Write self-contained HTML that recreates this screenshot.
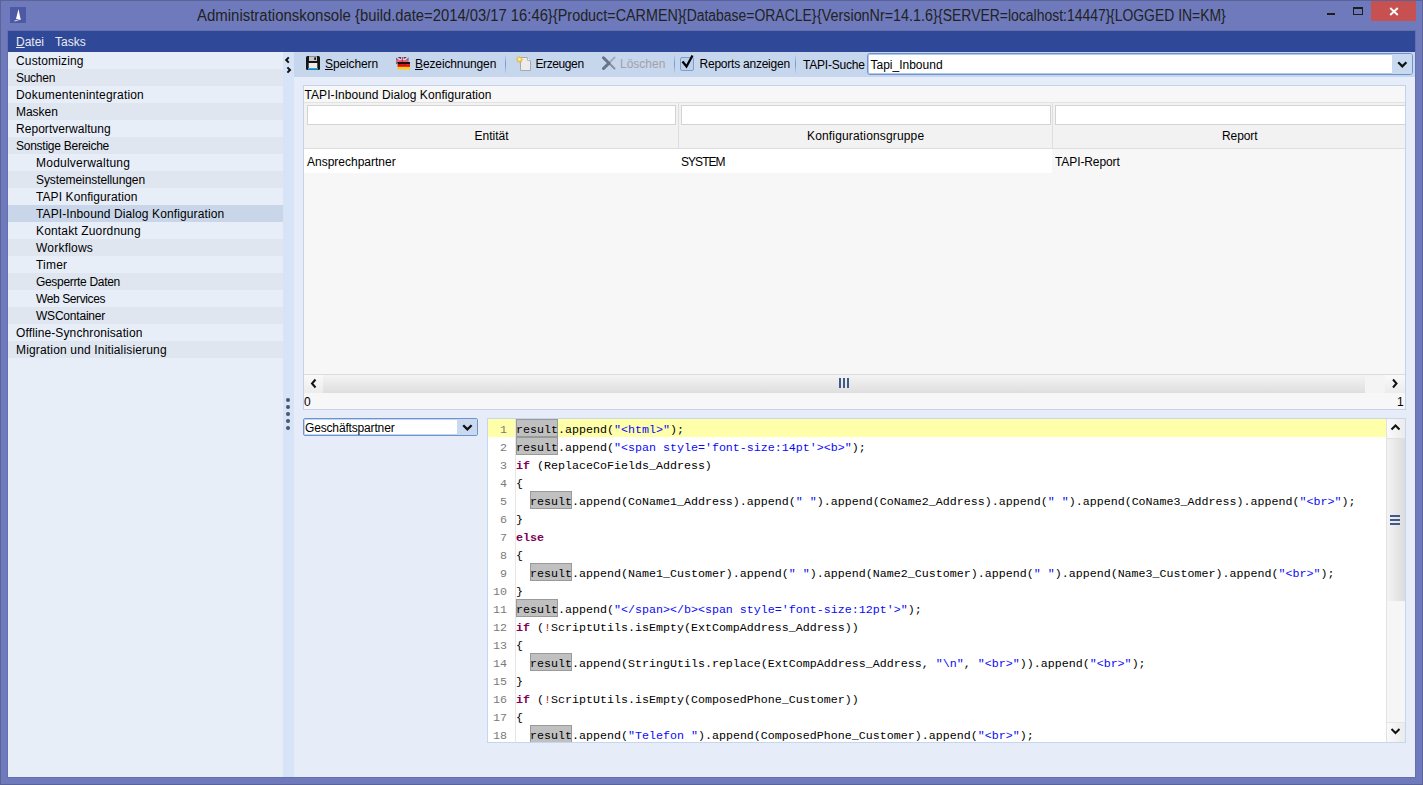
<!DOCTYPE html>
<html><head><meta charset="utf-8">
<style>
*{margin:0;padding:0;box-sizing:border-box}
html,body{width:1423px;height:785px;overflow:hidden}
body{position:relative;background:#6e7abb;font-family:"Liberation Sans",sans-serif;font-size:12px;color:#000}
.a{position:absolute}
.t{position:absolute;white-space:pre;line-height:17px;height:17px}
#frame{left:0;top:0;width:1423px;height:785px;border:1px solid #5b6499}
.tt{top:6px;font-size:16px;line-height:20px;color:#222;transform-origin:0 0}
#menubar{left:8px;top:31px;width:1407px;height:21px;background:#2f4897}
#menubar .t{color:#e8ebf3;top:3px}
#side{left:8px;top:52px;width:275px;height:725px;background:#e8eef8}
.row{position:absolute;left:0;width:275px;height:17px;line-height:17px;padding-left:8px;padding-top:1px;white-space:pre}
.row.d{background:#dfe6f0}
.row.s{background:#c9d6ea}
.row.i{padding-left:28px}
#split{left:283px;top:52px;width:11px;height:725px;background:#d7e3f6}
#main{left:294px;top:52px;width:1121px;height:725px;background:#e6edf8}
#toolbar{left:294px;top:52px;width:1121px;height:25px;background:#c6d6ec}
.sep{position:absolute;top:54px;width:1px;height:20px;background:linear-gradient(#c6d6ec,#6e97d6 50%,#c6d6ec)}
#panel{left:303px;top:85px;width:1103px;height:325px;border:1px solid #c3d3ec;background:#f7f7f7}
.ln{position:absolute;left:0;width:19px;padding-top:2px;text-align:right;font-family:"Liberation Mono",monospace;font-size:11.665px;line-height:18px;height:18px;color:#7a7a7a;white-space:pre}
.cl{position:absolute;left:28px;padding-top:2px;font-family:"Liberation Mono",monospace;font-size:11.665px;line-height:18px;height:18px;color:#000;white-space:pre}
.r{background:#c0c0c0;box-shadow:inset 0 0 0 1px #9a9a9a;display:inline-block;height:18px;margin-top:-2px;padding-top:2px;vertical-align:top}
.st{color:#0a0af5}
.k{color:#7f0055;font-weight:bold}
.x{color:#a02828}
</style></head><body>
<div id="frame" class="a"></div>
<!-- title bar -->
<div class="a" style="left:10px;top:7px;width:16px;height:16px;background:#4e59a5"></div>
<svg class="a" style="left:10px;top:7px" width="16" height="16" viewBox="0 0 16 16"><path d="M8.5 2 L10.5 12 L6 12 Z" fill="#fff"/><path d="M4.5 14 Q8 13 11 12" stroke="#fff" stroke-width="1" fill="none" opacity=".8"/></svg>
<div class="t tt" style="left:196.5px;transform:scaleX(0.9350)">Administrationskonsole </div>
<div class="t tt" style="left:354.6px;transform:scaleX(0.9244)">{build.date=2014/03/17 16:46}</div>
<div class="t tt" style="left:552.6px;transform:scaleX(0.8972)">{Product=CARMEN}</div>
<div class="t tt" style="left:682.3px;transform:scaleX(0.8711)">{Database=ORACLE}</div>
<div class="t tt" style="left:816.8px;transform:scaleX(0.8957)">{VersionNr=14.1.6}</div>
<div class="t tt" style="left:937.6px;transform:scaleX(0.8728)">{SERVER=localhost:14447}</div>
<div class="t tt" style="left:1110.2px;transform:scaleX(0.8707)">{LOGGED IN=KM}</div>
<div class="a" style="left:1327px;top:13px;width:8px;height:2px;background:#1e1e1e"></div>
<div class="a" style="left:1353px;top:7px;width:10px;height:8px;border:1px solid #1e1e1e;border-top-width:2px"></div>
<div class="a" style="left:1371px;top:1px;width:45px;height:20px;background:#c75050"></div>
<svg class="a" style="left:1389px;top:7px" width="10" height="9" viewBox="0 0 10 9"><path d="M1.2 1 L8.8 8 M8.8 1 L1.2 8" stroke="#fff" stroke-width="1.9"/></svg>

<div class="a" style="left:7px;top:30px;width:1409px;height:748px;border:1px solid #6470ad"></div>
<!-- menubar -->
<div id="menubar" class="a">
  <div class="t" style="left:8px"><u>D</u>atei</div>
  <div class="t" style="left:47px">Tasks</div>
</div>

<!-- sidebar -->
<div id="side" class="a">
  <div class="row" style="top:0;letter-spacing:0.15px">Customizing</div>
  <div class="row d" style="top:17px;letter-spacing:-0.280px">Suchen</div>
  <div class="row" style="top:34px;letter-spacing:0.185px">Dokumentenintegration</div>
  <div class="row d" style="top:51px;letter-spacing:-0.040px">Masken</div>
  <div class="row" style="top:68px;letter-spacing:0.040px">Reportverwaltung</div>
  <div class="row d" style="top:85px;letter-spacing:-0.256px">Sonstige Bereiche</div>
  <div class="row i" style="top:102px;letter-spacing:0.229px">Modulverwaltung</div>
  <div class="row i d" style="top:119px;letter-spacing:-0.089px">Systemeinstellungen</div>
  <div class="row i" style="top:136px;letter-spacing:0.088px">TAPI Konfiguration</div>
  <div class="row i s" style="top:153px;letter-spacing:0.112px">TAPI-Inbound Dialog Konfiguration</div>
  <div class="row i" style="top:170px;letter-spacing:0.156px">Kontakt Zuordnung</div>
  <div class="row i d" style="top:187px;letter-spacing:0.213px">Workflows</div>
  <div class="row i" style="top:204px;letter-spacing:0.200px">Timer</div>
  <div class="row i d" style="top:221px;letter-spacing:-0.321px">Gesperrte Daten</div>
  <div class="row i" style="top:238px;letter-spacing:-0.400px">Web Services</div>
  <div class="row i d" style="top:255px;letter-spacing:-0.210px">WSContainer</div>
  <div class="row" style="top:272px;letter-spacing:0.114px">Offline-Synchronisation</div>
  <div class="row d" style="top:289px;letter-spacing:0.161px">Migration und Initialisierung</div>
</div>
<div id="split" class="a"></div>
<div id="main" class="a"></div>
<div id="toolbar" class="a"></div>
<div id="panel" class="a"></div>


<!-- panel content -->
<div class="t" style="left:304.5px;top:87px;letter-spacing:0.075px">TAPI-Inbound Dialog Konfiguration</div>
<div class="a" style="left:304px;top:102px;width:1101px;height:47px;background:#f2f2f2;border-top:1px solid #e3e3e3;border-bottom:1px solid #dedede"></div>
<div class="a" style="left:678px;top:103px;width:1px;height:45px;background:#dedede"></div>
<div class="a" style="left:1052px;top:103px;width:1px;height:45px;background:#dedede"></div>
<div class="a" style="left:307px;top:105px;width:369px;height:20px;background:#fff;border:1px solid #d3d3d3"></div>
<div class="a" style="left:681px;top:105px;width:370px;height:20px;background:#fff;border:1px solid #d3d3d3"></div>
<div class="a" style="left:1055px;top:105px;width:350px;height:20px;background:#fff;border:1px solid #d3d3d3;border-right:0"></div>
<div class="t" style="left:474.5px;top:128px">Entität</div>
<div class="t" style="left:807px;top:128px;letter-spacing:0.16px">Konfigurationsgruppe</div>
<div class="t" style="left:1222px;top:128px;letter-spacing:-0.1px">Report</div>
<div class="a" style="left:304px;top:149px;width:748px;height:24px;background:#fff"></div>
<div class="t" style="left:307px;top:154px">Ansprechpartner</div>
<div class="t" style="left:681px;top:154px;letter-spacing:-0.95px">SYSTEM</div>
<div class="t" style="left:1055px;top:154px;letter-spacing:-0.1px">TAPI-Report</div>
<!-- h scrollbar -->
<div class="a" style="left:304px;top:374px;width:1101px;height:19px;background:linear-gradient(#f4f4f4,#dedede);border-top:1px solid #dcdcdc"></div>
<div class="a" style="left:304px;top:375px;width:19px;height:18px;background:linear-gradient(#f9f9f9,#ececec)"></div>
<div class="a" style="left:1365px;top:375px;width:20px;height:18px;background:#f4f4f4"></div>
<div class="a" style="left:1385px;top:375px;width:20px;height:18px;background:linear-gradient(#f9f9f9,#ececec)"></div>
<svg class="a" style="left:309px;top:378px" width="10" height="11" viewBox="0 0 10 11"><path d="M6.5 1.5 L3 5.5 L6.5 9.5" stroke="#111" stroke-width="2" fill="none"/></svg>
<svg class="a" style="left:1390px;top:378px" width="10" height="11" viewBox="0 0 10 11"><path d="M3 1.5 L6.5 5.5 L3 9.5" stroke="#111" stroke-width="2" fill="none"/></svg>
<div class="a" style="left:839px;top:378px;width:2px;height:10px;background:#3d5a8a"></div>
<div class="a" style="left:843px;top:378px;width:2px;height:10px;background:#3d5a8a"></div>
<div class="a" style="left:847px;top:378px;width:2px;height:10px;background:#3d5a8a"></div>
<div class="t" style="left:304px;top:394px">0</div>
<div class="t" style="left:1397px;top:394px">1</div>
<!-- splitter dots -->
<div class="a" style="left:286px;top:398px;width:4px;height:4px;border-radius:2px;background:#4a5568"></div>
<div class="a" style="left:286px;top:405px;width:4px;height:4px;border-radius:2px;background:#4a5568"></div>
<div class="a" style="left:286px;top:412px;width:4px;height:4px;border-radius:2px;background:#4a5568"></div>
<div class="a" style="left:286px;top:419px;width:4px;height:4px;border-radius:2px;background:#4a5568"></div>
<div class="a" style="left:286px;top:426px;width:4px;height:4px;border-radius:2px;background:#4a5568"></div>
<!-- combo -->
<div class="a" style="left:303px;top:418px;width:175px;height:18px;border:1px solid #6f93cf;border-radius:2px;background:#fff;box-shadow:inset 0 0 0 1px #c2d4ee"></div>
<div class="a" style="left:457px;top:419px;width:20px;height:16px;background:#c9d9ef"></div>
<svg class="a" style="left:461px;top:423px" width="12" height="10" viewBox="0 0 12 10"><path d="M2.2 2.2 L6.4 6.4 L10.6 2.2" stroke="#111" stroke-width="2.3" fill="none"/></svg>
<div class="t" style="left:305px;top:420px;letter-spacing:-0.16px">Geschäftspartner</div>

<div class="a" style="left:487px;top:418px;width:919px;height:325px;border:1px solid #c6d6ee;background:#fff"></div>
<div class="a" style="left:488px;top:419px;width:898px;height:18px;background:#ffffaa"></div>
<div class="a" style="left:515px;top:419px;width:1px;height:323px;background:#e6e6e6"></div>
<div id="code" class="a" style="left:488px;top:419px;width:898px;height:323px;overflow:hidden">
<div class="ln" style="top:0px">1</div><div class="cl" style="top:0px"><span class="r">result</span>.append(<span class="st">"&lt;html&gt;"</span>);</div>
<div class="ln" style="top:18px">2</div><div class="cl" style="top:18px"><span class="r">result</span>.append(<span class="st">"&lt;span style='font-size:14pt'&gt;&lt;b&gt;"</span>);</div>
<div class="ln" style="top:36px">3</div><div class="cl" style="top:36px"><span class="k">if</span> (ReplaceCoFields_Address)</div>
<div class="ln" style="top:54px">4</div><div class="cl" style="top:54px">{</div>
<div class="ln" style="top:72px">5</div><div class="cl" style="top:72px">  <span class="r">result</span>.append(CoName1_Address).append(<span class="st">" "</span>).append(CoName2_Address).append(<span class="st">" "</span>).append(CoName3_Address).append(<span class="st">"&lt;br&gt;"</span>);</div>
<div class="ln" style="top:90px">6</div><div class="cl" style="top:90px">}</div>
<div class="ln" style="top:108px">7</div><div class="cl" style="top:108px"><span class="k">else</span></div>
<div class="ln" style="top:126px">8</div><div class="cl" style="top:126px">{</div>
<div class="ln" style="top:144px">9</div><div class="cl" style="top:144px">  <span class="r">result</span>.append(Name1_Customer).append(<span class="st">" "</span>).append(Name2_Customer).append(<span class="st">" "</span>).append(Name3_Customer).append(<span class="st">"&lt;br&gt;"</span>);</div>
<div class="ln" style="top:162px">10</div><div class="cl" style="top:162px">}</div>
<div class="ln" style="top:180px">11</div><div class="cl" style="top:180px"><span class="r">result</span>.append(<span class="st">"&lt;/span&gt;&lt;/b&gt;&lt;span style='font-size:12pt'&gt;"</span>);</div>
<div class="ln" style="top:198px">12</div><div class="cl" style="top:198px"><span class="k">if</span> (<span class="x">!</span>ScriptUtils.isEmpty(ExtCompAddress_Address))</div>
<div class="ln" style="top:216px">13</div><div class="cl" style="top:216px">{</div>
<div class="ln" style="top:234px">14</div><div class="cl" style="top:234px">  <span class="r">result</span>.append(StringUtils.replace(ExtCompAddress_Address, <span class="st">"\n"</span>, <span class="st">"&lt;br&gt;"</span>)).append(<span class="st">"&lt;br&gt;"</span>);</div>
<div class="ln" style="top:252px">15</div><div class="cl" style="top:252px">}</div>
<div class="ln" style="top:270px">16</div><div class="cl" style="top:270px"><span class="k">if</span> (<span class="x">!</span>ScriptUtils.isEmpty(ComposedPhone_Customer))</div>
<div class="ln" style="top:288px">17</div><div class="cl" style="top:288px">{</div>
<div class="ln" style="top:306px">18</div><div class="cl" style="top:306px">  <span class="r">result</span>.append(<span class="st">"Telefon "</span>).append(ComposedPhone_Customer).append(<span class="st">"&lt;br&gt;"</span>);</div>
</div>
<div class="a" style="left:1386px;top:419px;width:19px;height:323px;background:#f6f6f6;border-left:1px solid #e2e2e2"></div>
<div class="a" style="left:1387px;top:419px;width:18px;height:19px;background:linear-gradient(90deg,#fafafa,#ebebeb)"></div>
<div class="a" style="left:1387px;top:438px;width:18px;height:163px;background:linear-gradient(90deg,#f3f3f3,#dcdcdc);border-top:1px solid #e0e0e0"></div>
<div class="a" style="left:1387px;top:722px;width:18px;height:20px;background:linear-gradient(90deg,#fafafa,#ebebeb);border-top:1px solid #e6e6e6"></div>
<svg class="a" style="left:1390px;top:423px" width="11" height="10" viewBox="0 0 11 10"><path d="M1.5 6.5 L5.5 2.5 L9.5 6.5" stroke="#111" stroke-width="2" fill="none"/></svg>
<svg class="a" style="left:1390px;top:726px" width="11" height="10" viewBox="0 0 11 10"><path d="M1.5 3 L5.5 7 L9.5 3" stroke="#111" stroke-width="2" fill="none"/></svg>
<div class="a" style="left:1390px;top:515px;width:10px;height:2px;background:#3d5a8a"></div>
<div class="a" style="left:1390px;top:519px;width:10px;height:2px;background:#3d5a8a"></div>
<div class="a" style="left:1390px;top:523px;width:10px;height:2px;background:#3d5a8a"></div>
<!-- splitter arrows -->
<svg class="a" style="left:284px;top:55px" width="8" height="20" viewBox="0 0 8 20"><path d="M4.8 2.4 L2.2 5 L4.8 7.6" fill="none" stroke="#111" stroke-width="2"/><path d="M3.4 12.4 L6 15 L3.4 17.6" fill="none" stroke="#111" stroke-width="2"/></svg>
<!-- toolbar icons -->
<svg class="a" style="left:306px;top:56px" width="14" height="14" viewBox="0 0 14 14">
 <rect x="0" y="0" width="14" height="14" rx="1.5" fill="#151515"/>
 <rect x="3" y="0.3" width="8" height="4.7" fill="#c8c8c8"/>
 <rect x="8.2" y="1.3" width="1.8" height="2.8" rx=".8" fill="#151515"/>
 <rect x="2.7" y="7" width="8.6" height="5" fill="#ececec"/>
 <rect x="2" y="12" width="10" height="1.7" fill="#2ba6dd"/>
</svg>
<div class="t" style="left:325px;top:56px;letter-spacing:-0.12px"><u>S</u>peichern</div>
<svg class="a" style="left:396px;top:56px" width="15" height="14" viewBox="0 0 15 14">
 <rect x="0" y="1" width="12.5" height="8" fill="#1d3e7a"/>
 <path d="M0 1 L12.5 9 M12.5 1 L0 9" stroke="#f3c0c8" stroke-width="1.6"/>
 <path d="M6.25 1 V9 M0 5 H12.5" stroke="#fff" stroke-width="2.6"/>
 <path d="M6.25 1 V9 M0 5 H12.5" stroke="#e0304a" stroke-width="1.4"/>
 <rect x="1.6" y="6" width="12.4" height="2.2" fill="#111"/>
 <rect x="1.6" y="8.2" width="12.4" height="2.7" fill="#dd1010"/>
 <rect x="1.6" y="10.9" width="12.4" height="2.5" fill="#fbcf00"/>
</svg>
<div class="t" style="left:415px;top:56px;letter-spacing:-0.12px"><u>B</u>ezeichnungen</div>
<div class="sep" style="left:505px"></div>
<svg class="a" style="left:515px;top:55px" width="17" height="16" viewBox="0 0 17 16">
 <path d="M5.5 2.5 H12.5 L15.5 5.5 V15.5 H5.5 Z" fill="#ececec" stroke="#a9a9a9" stroke-width="1"/>
 <path d="M12.5 2.5 V5.5 H15.5" fill="#fafafa" stroke="#b5b5b5" stroke-width="1"/>
 <polygon points="4.50,0.20 5.38,2.38 7.54,1.46 6.62,3.62 8.80,4.50 6.62,5.38 7.54,7.54 5.38,6.62 4.50,8.80 3.62,6.62 1.46,7.54 2.38,5.38 0.20,4.50 2.38,3.62 1.46,1.46 3.62,2.38" fill="#e2bc3c" opacity=".75"/>
 <circle cx="4.5" cy="4.5" r="2.5" fill="#e6c24a"/>
 <circle cx="4.4" cy="4.3" r="1.4" fill="#fff0b0"/>
</svg>
<div class="t" style="left:535.5px;top:56px;letter-spacing:-0.4px">Erzeugen</div>
<svg class="a" style="left:601px;top:56px" width="16" height="15" viewBox="0 0 16 15">
 <path d="M13.5 1.5 L2.5 12.5" stroke="#a3adbd" stroke-width="2" stroke-linecap="round"/>
 <path d="M2.5 1.8 L13.5 12.5" stroke="#8590a2" stroke-width="2" stroke-linecap="round"/>
 <path d="M2.5 1.8 L8 7.2 M2.5 12.5 L8 7.2" stroke="#6a7486" stroke-width="3" stroke-linecap="round"/>
</svg>
<div class="t" style="left:620px;top:56px;color:#a2a2a8">Löschen</div>
<div class="sep" style="left:674px"></div>
<div class="a" style="left:680px;top:57px;width:14px;height:14px;border:1px solid #7d9ed4;border-radius:2px;background:#bfd1ea"></div>
<svg class="a" style="left:680px;top:53px" width="15" height="17" viewBox="0 0 15 17"><path d="M2.5 8.5 L6.5 13.5 L12.5 2.5" stroke="#000" stroke-width="2.3" fill="none"/></svg>
<div class="t" style="left:699.5px;top:56px;letter-spacing:-0.23px">Reports anzeigen</div>
<div class="sep" style="left:795px"></div>
<div class="t" style="left:803px;top:57px;letter-spacing:-0.2px">TAPI-Suche</div>
<div class="a" style="left:867px;top:53px;width:546px;height:22px;border:1px solid #7092cf;border-radius:3px;background:#fff;box-shadow:inset 0 0 0 1px #b3c9ea"></div>
<div class="a" style="left:1392px;top:54px;width:20px;height:20px;background:#c9d9ef;border-radius:0 2px 2px 0"></div>
<svg class="a" style="left:1396px;top:60px" width="12" height="10" viewBox="0 0 12 10"><path d="M2.2 2.3 L6.3 6.4 L10.4 2.3" stroke="#111" stroke-width="2.3" fill="none"/></svg>
<div class="t" style="left:870.5px;top:57px">Tapi_Inbound</div>


</body></html>
